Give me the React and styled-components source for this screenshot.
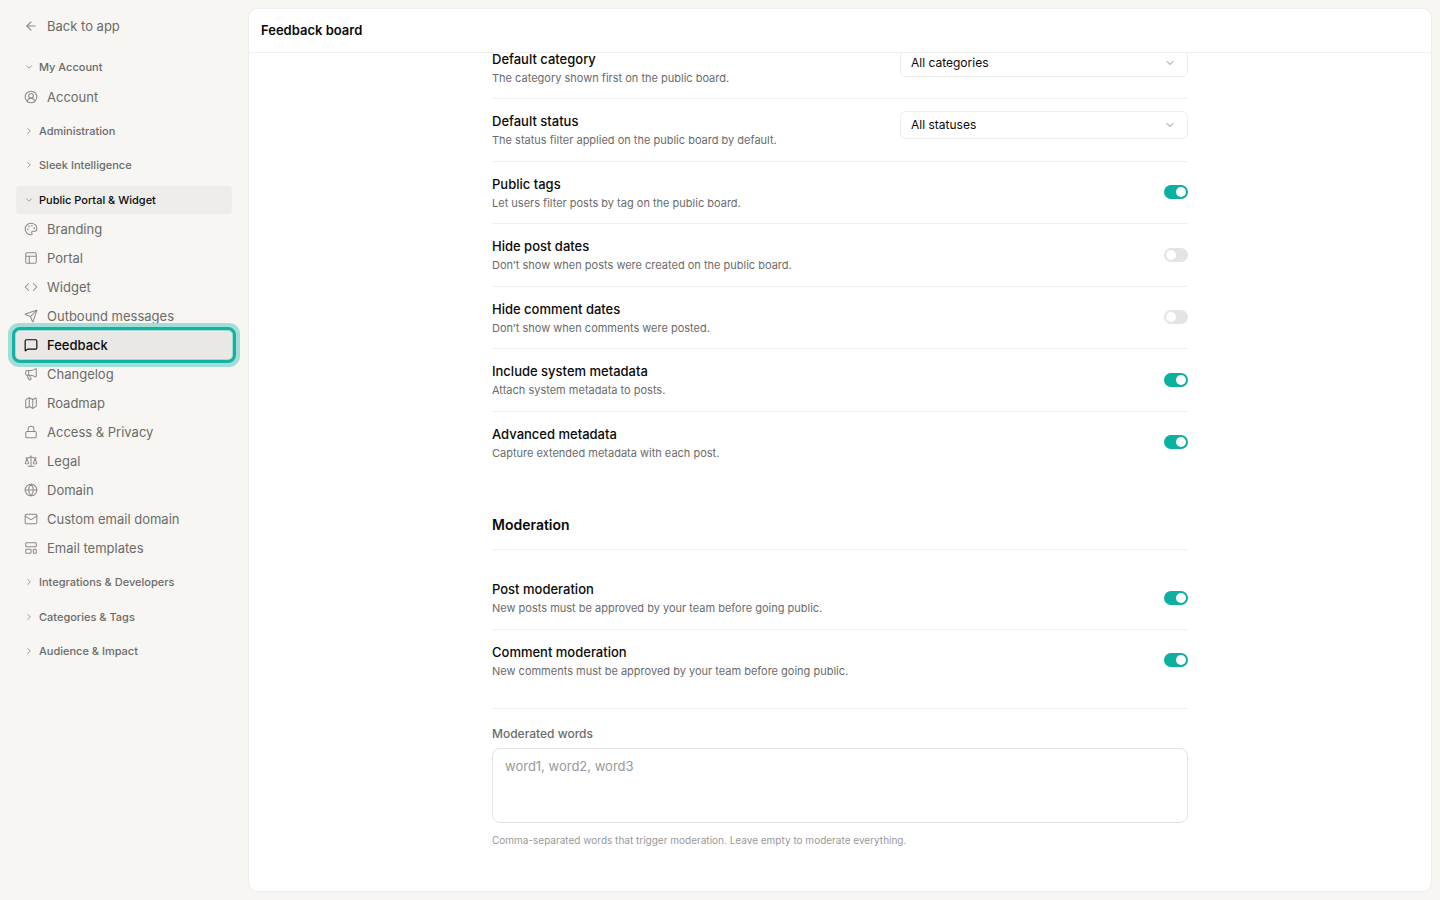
import {
  ArrowLeft,
  ChevronDown,
  ChevronRight,
  CircleUserRound,
  Code,
  Globe,
  LayoutTemplate,
  Lock,
  Mail,
  Map,
  Megaphone,
  MessageSquare,
  Palette,
  PanelsTopLeft,
  Scale,
  Send,
} from 'lucide-react';
import React from 'react';
import styled, { createGlobalStyle, css } from 'styled-components';

const NAV = [
  {
    label: 'My Account',
    items: [{ label: 'Account', icon: CircleUserRound }],
  },
  { label: 'Administration' },
  { label: 'Sleek Intelligence' },
  {
    label: 'Public Portal & Widget',
    current: true,
    items: [
      { label: 'Branding', icon: Palette },
      { label: 'Portal', icon: PanelsTopLeft },
      { label: 'Widget', icon: Code },
      { label: 'Outbound messages', icon: Send },
      { label: 'Feedback', icon: MessageSquare, current: true },
      { label: 'Changelog', icon: Megaphone },
      { label: 'Roadmap', icon: Map },
      { label: 'Access & Privacy', icon: Lock },
      { label: 'Legal', icon: Scale },
      { label: 'Domain', icon: Globe },
      { label: 'Custom email domain', icon: Mail },
      { label: 'Email templates', icon: LayoutTemplate },
    ],
  },
  { label: 'Integrations & Developers' },
  { label: 'Categories & Tags' },
  { label: 'Audience & Impact' },
];

const BOARD_SETTINGS = [
  {
    id: 'default-category',
    title: 'Default category',
    hint: 'The category shown first on the public board.',
    options: ['All categories'],
  },
  {
    id: 'default-status',
    title: 'Default status',
    hint: 'The status filter applied on the public board by default.',
    options: ['All statuses'],
  },
  {
    id: 'public-tags',
    title: 'Public tags',
    hint: 'Let users filter posts by tag on the public board.',
    on: true,
  },
  {
    id: 'hide-post-dates',
    title: 'Hide post dates',
    hint: 'Don’t show when posts were created on the public board.',
  },
  {
    id: 'hide-comment-dates',
    title: 'Hide comment dates',
    hint: 'Don’t show when comments were posted.',
  },
  {
    id: 'system-metadata',
    title: 'Include system metadata',
    hint: 'Attach system metadata to posts.',
    on: true,
  },
  {
    id: 'advanced-metadata',
    title: 'Advanced metadata',
    hint: 'Capture extended metadata with each post.',
    on: true,
  },
];

const MODERATION_SETTINGS = [
  {
    id: 'post-moderation',
    title: 'Post moderation',
    hint: 'New posts must be approved by your team before going public.',
    on: true,
  },
  {
    id: 'comment-moderation',
    title: 'Comment moderation',
    hint: 'New comments must be approved by your team before going public.',
    on: true,
  },
];

const NavGroup = ({ label, items, current }) => {
  const [open, setOpen] = React.useState(Boolean(items));
  const Chevron = open ? ChevronDown : ChevronRight;
  return (
    <StyledGroup>
      <StyledGroupButton
        type="button"
        aria-expanded={open}
        $current={current}
        onClick={() => setOpen(!open)}
      >
        <Chevron size={10} />
        {label}
      </StyledGroupButton>
      {open &&
        items?.map(({ label: text, icon: Icon, current: active }) => (
          <StyledNavLink
            key={text}
            href="#"
            $current={active}
            aria-current={active ? 'page' : undefined}
          >
            <Icon size={14} strokeWidth={active ? 2 : 1.75} />
            {text}
          </StyledNavLink>
        ))}
    </StyledGroup>
  );
};

const SettingRow = ({ id, title, hint, options, on }) => {
  const [checked, setChecked] = React.useState(Boolean(on));
  return (
    <StyledRow $top={Boolean(options)}>
      <div>
        <StyledTitle htmlFor={id}>{title}</StyledTitle>
        <StyledHint id={`${id}-hint`}>{hint}</StyledHint>
      </div>
      {options ? (
        <StyledSelectWrapper>
          <StyledSelect id={id} aria-describedby={`${id}-hint`}>
            {options.map((option) => (
              <option key={option}>{option}</option>
            ))}
          </StyledSelect>
          <ChevronDown size={12} />
        </StyledSelectWrapper>
      ) : (
        <StyledToggle
          id={id}
          type="checkbox"
          role="switch"
          aria-describedby={`${id}-hint`}
          checked={checked}
          onChange={() => setChecked(!checked)}
        />
      )}
    </StyledRow>
  );
};

const App = () => (
  <>
    <GlobalStyle />
    <StyledLayout>
      <StyledSidebar>
        <StyledNavLink href="#">
          <ArrowLeft size={14} />
          Back to app
        </StyledNavLink>
        <StyledNav aria-label="Settings">
          {NAV.map((group) => (
            <NavGroup key={group.label} {...group} />
          ))}
        </StyledNav>
      </StyledSidebar>
      <StyledPanel>
        <StyledHeader>
          <h1>Feedback board</h1>
        </StyledHeader>
        <StyledScroller>
          <StyledContent>
            <section>
              {BOARD_SETTINGS.map((setting) => (
                <SettingRow key={setting.id} {...setting} />
              ))}
            </section>
            <section>
              <StyledSectionTitle>Moderation</StyledSectionTitle>
              {MODERATION_SETTINGS.map((setting) => (
                <SettingRow key={setting.id} {...setting} />
              ))}
            </section>
            <StyledField>
              <StyledFieldLabel htmlFor="moderated-words">
                Moderated words
              </StyledFieldLabel>
              <StyledTextarea
                id="moderated-words"
                placeholder="word1, word2, word3"
                aria-describedby="moderated-words-help"
              />
              <StyledHelp id="moderated-words-help">
                Comma-separated words that trigger moderation. Leave empty to
                moderate everything.
              </StyledHelp>
            </StyledField>
          </StyledContent>
        </StyledScroller>
      </StyledPanel>
    </StyledLayout>
  </>
);

export default App;

/* Styled Components */

const GlobalStyle = createGlobalStyle`
  * {
    box-sizing: border-box;
  }
  body {
    margin: 0;
    background: #f7f6f2;
    color: #0a0a0a;
    font-family: Inter, 'Liberation Sans', sans-serif;
    font-size: 13px;
    line-height: 1.5;
  }
  h1, h2, p {
    margin: 0;
  }
  button, input, select, textarea {
    font: inherit;
    color: inherit;
  }
`;

const StyledLayout = styled.div`
  display: grid;
  grid-template-columns: 248px minmax(0, 1fr);
  height: 100vh;
`;

const StyledSidebar = styled.aside`
  padding: 12px 16px;
  overflow: hidden;
`;

const StyledNav = styled.nav`
  display: flex;
  flex-direction: column;
  gap: 6px;
  margin-top: 13px;
`;

const StyledGroup = styled.div`
  display: flex;
  flex-direction: column;
  gap: 1px;
`;

const StyledGroupButton = styled.button`
  display: flex;
  align-items: center;
  gap: 5px;
  padding: 6px 8px;
  border: 0;
  border-radius: 4px;
  background: ${(props) => (props.$current ? '#eeedea' : 'transparent')};
  color: ${(props) => (props.$current ? '#0a0a0a' : '#6b6b6b')};
  font-size: 11px;
  font-weight: 500;
  text-align: left;
  cursor: pointer;
  svg {
    color: #8a8a8a;
  }
`;

const StyledNavLink = styled.a`
  display: flex;
  align-items: center;
  gap: 9px;
  height: 28px;
  padding: 0 8px;
  border-radius: 4px;
  color: #6b6b6b;
  font-size: 13px;
  line-height: 20px;
  text-decoration: none;
  svg {
    flex: none;
    color: #8a8a8f;
  }
  ${(props) =>
    props.$current &&
    css`
      background: #e9e8e4;
      color: #0a0a0a;
      font-weight: 500;
      outline: 3px solid #14b0a2;
      outline-offset: 1px;
      box-shadow: 0 0 0 8px #a3ded6;
      svg {
        color: #0a0a0a;
      }
    `}
`;

const StyledPanel = styled.main`
  display: flex;
  flex-direction: column;
  min-height: 0;
  margin: 9px 9px 9px 1px;
  border-radius: 8px;
  background: #fff;
  box-shadow: 0 0 2px rgba(0, 0, 0, 0.12);
  overflow: hidden;
`;

const StyledHeader = styled.header`
  flex: none;
  padding: 11px 12px;
  border-bottom: 1px solid #eee;
  h1 {
    font-size: 13px;
    font-weight: 600;
    line-height: 21px;
  }
`;

/* column-reverse keeps the view pinned to the end of the settings */
const StyledScroller = styled.div`
  display: flex;
  flex: 1;
  flex-direction: column-reverse;
  min-height: 0;
  overflow-y: auto;
  scrollbar-width: none;
`;

const StyledContent = styled.div`
  width: 100%;
  max-width: 744px;
  margin: 0 auto;
  padding: 0 24px 43px;
`;

const StyledRow = styled.div`
  display: flex;
  align-items: ${(props) => (props.$top ? 'flex-start' : 'center')};
  justify-content: space-between;
  gap: 24px;
  padding: 12px 0;
  border-bottom: 1px solid #efefef;
  &:last-child {
    border-bottom: 0;
  }
`;

const StyledTitle = styled.label`
  display: block;
  font-size: 13px;
  font-weight: 500;
  line-height: 20px;
`;

const StyledHint = styled.p`
  margin-top: 1px;
  color: #6b6b6b;
  font-size: 11px;
`;

const StyledSelectWrapper = styled.div`
  display: grid;
  flex: none;
  align-items: center;
  width: 288px;
  > * {
    grid-area: 1 / 1;
  }
  svg {
    justify-self: end;
    margin-right: 12px;
    color: #8a8a8a;
    pointer-events: none;
  }
`;

const StyledSelect = styled.select`
  width: 100%;
  height: 28px;
  padding: 0 32px 0 10px;
  border: 1px solid #ececec;
  border-radius: 6px;
  background: #fff;
  font-size: 12px;
  appearance: none;
`;

const StyledToggle = styled.input`
  display: flex;
  flex: none;
  align-items: center;
  width: 24px;
  height: 14px;
  margin: 0;
  padding: 2px;
  border-radius: 7px;
  background: #e4e4e4;
  appearance: none;
  cursor: pointer;
  &::before {
    content: '';
    width: 10px;
    height: 10px;
    border-radius: 50%;
    background: #fff;
  }
  &:checked {
    justify-content: flex-end;
    background: #0cb0a0;
  }
`;

const StyledSectionTitle = styled.h2`
  margin: 41px 0 17px;
  padding-bottom: 14px;
  border-bottom: 1px solid #efefef;
  font-size: 14px;
  font-weight: 600;
`;

const StyledField = styled.div`
  display: flex;
  flex-direction: column;
  margin-top: 17px;
  padding-top: 16px;
  border-top: 1px solid #efefef;
`;

const StyledFieldLabel = styled.label`
  color: #6b6b6b;
  font-size: 12px;
  font-weight: 500;
`;

const StyledTextarea = styled.textarea`
  height: 75px;
  margin: 5px 0 10px;
  padding: 8px 12px;
  border: 1px solid #e2e2e2;
  border-radius: 8px;
  background: #fff;
  font-size: 13px;
  resize: none;
  &::placeholder {
    color: #999;
  }
`;

const StyledHelp = styled.p`
  color: #999;
  font-size: 10px;
`;
